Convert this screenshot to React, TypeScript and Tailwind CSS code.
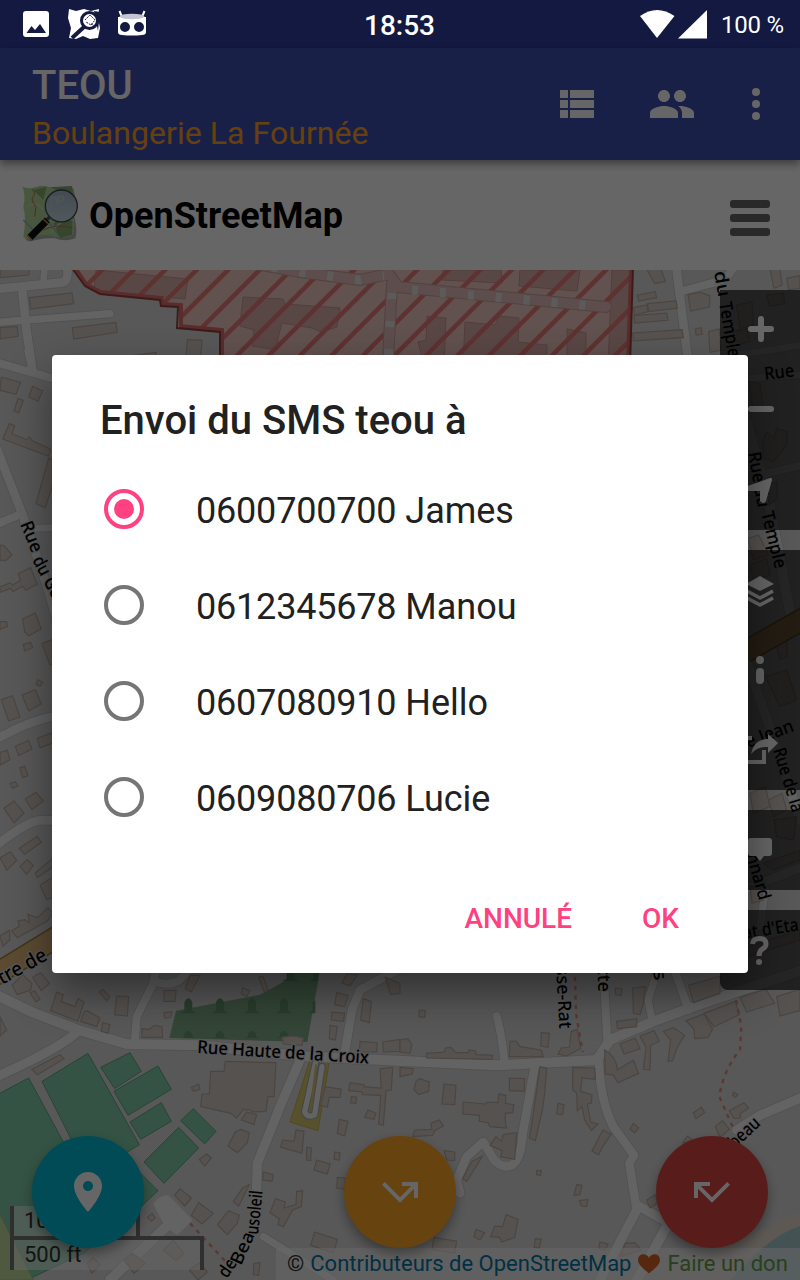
import React from "react";

const contacts = [
  { phone: "0600700700", name: "James", checked: true },
  { phone: "0612345678", name: "Manou", checked: false },
  { phone: "0607080910", name: "Hello", checked: false },
  { phone: "0609080706", name: "Lucie", checked: false },
];

type Tile = { x: number; y: number; roads?: [string, number][]; buildings?: string[] };

/* Every tile is drawn at three times its size on the page. */
const tiles: Tile[] = [
  {
    x: 0,
    y: 265,
    roads: [
      ["M-10 72 L190 52 Q208 45 200 0", 30],
      ["M130 60 L134 0", 24],
      ["M-10 172 L330 146", 26],
      ["M66 70 L80 200 L95 300", 30],
    ],
    buildings: [
      "M0 12 L88 8 L86 30 L0 38z",
      "M88 98 L216 84 L221 116 L92 132z",
      "M0 188 L52 184 L54 214 L0 222z",
      "M217 188 L348 172 L352 202 L221 222z",
      "M562 224 L606 226 L602 280 L558 278z",
      "M398 272 L468 262 L470 290 L396 290z",
    ],
  },
  {
    x: 400,
    y: 265,
    roads: [
      ["M828 0 L866 300", 30],
      ["M848 78 L975 44 L1000 10", 28],
      ["M1020 268 L1210 240", 24],
    ],
    buildings: [
      "M740 12 L782 10 L796 50 L764 56z",
      "M712 90 L766 80 L770 98 L716 108z",
      "M700 128 L740 120 L744 140 L704 150z",
      "M742 116 L828 108 L832 130 L746 140z",
      "M702 152 L800 144 L804 166 L704 174z",
      "M698 204 L846 194 L850 218 L700 228z",
      "M864 88 L902 82 L930 92 L928 126 L872 138z",
      "M886 192 L904 188 L906 208 L888 210z",
      "M926 200 L958 192 L962 256 L930 262z",
      "M1110 12 L1140 12 L1146 60 L1122 70z",
      "M1100 90 L1150 84 L1154 116 L1108 124z",
      "M1000 200 L1040 190 L1050 230 L1010 240z",
      "M1160 40 L1200 32 L1200 70 L1166 74z",
    ],
  },
  {
    x: 0,
    y: 355,
    roads: [
      ["M-10 22 L170 74", 28],
      ["M84 -10 L100 50", 26],
      ["M-10 280 L68 480 L140 690 L190 860", 30],
      ["M60 478 L-10 508", 28],
      ["M70 500 L90 520 L170 518", 24],
    ],
    buildings: [
      "M4 66 L62 82 L48 118 L0 106z",
      "M98 94 L128 108 L114 138 L86 126z",
      "M54 130 L70 136 L56 174 L42 168z",
      "M28 206 L44 212 L36 236 L80 254 L88 246 L98 258 L152 282 L146 304 L8 252z",
      "M146 310 L180 320 L136 458 L108 446z",
      "M0 570 L12 572 L36 600 L18 616 L0 616z",
      "M54 656 L92 638 L112 688 L78 706 L68 694 L38 710 L32 700 L0 712 L0 696 L30 684 L38 690 L62 676z",
      "M68 792 L106 774 L124 822 L86 842 L74 830z",
      "M70 868 L92 862 L98 878 L74 888z",
      "M0 800 L20 800 L22 814 L0 824z",
      "M126 866 L160 852 L180 920 L150 930z",
    ],
  },
  {
    x: 0,
    y: 665,
    roads: [
      ["M-10 222 Q90 165 170 152", 30],
      ["M-10 540 Q80 470 120 466 L170 466", 30],
    ],
    buildings: [
      "M4 104 L38 92 L60 156 L26 168z",
      "M66 90 L106 74 L124 116 L86 138z",
      "M114 44 L128 52 L120 64 L108 58z",
      "M46 244 L86 226 L96 252 L56 272z",
      "M112 220 L160 202 L166 232 L120 248z",
      "M0 262 L22 256 L30 284 L0 300z",
      "M60 308 L74 304 L84 332 L68 338z",
      "M30 356 L46 350 L54 362 L38 370z",
      "M12 430 L42 408 L72 444 L42 474z",
      "M76 402 L108 382 L130 408 L96 434z",
      "M58 550 L112 514 L124 532 L74 568z",
      "M0 578 L32 560 L50 586 L20 616z",
      "M60 604 L82 584 L100 602 L80 628z",
      "M106 624 L160 578 L170 598 L112 638z",
      "M120 660 L160 636 L180 690 L140 704z",
      "M34 798 L58 784 L54 768 L74 764 L88 774 L84 748 L112 758 L144 728 L158 744 L142 768 L52 818z",
      "M0 812 L28 796 L30 824 L8 844z",
    ],
  },
  {
    x: 0,
    y: 960,
    roads: [
      ["M-10 105 L100 158 L235 210 L380 252 L600 256 L900 288 L1210 303", 34],
      ["M235 212 Q190 260 -10 350", 32],
      ["M470 20 L460 70 L410 170 L404 250", 28],
      ["M470 66 Q510 78 536 62 L580 20", 28],
      ["M1210 20 L1080 90 L1056 150 L1034 280", 30],
      ["M900 300 L840 440 L772 610 L768 760", 32],
      ["M330 960 L520 780", 34],
      ["M790 830 L1000 960", 26],
    ],
    buildings: [
      "M36 76 L68 44 L96 70 L92 90 L52 104z",
      "M98 52 L122 38 L148 70 L124 92z",
      "M90 98 L104 92 L120 118 L108 126z",
      "M170 96 L190 104 L184 124 L224 140 L234 116 L252 126 L234 184 L152 152z",
      "M252 156 L262 152 L300 174 L290 200 L242 184z",
      "M308 188 L330 194 L324 220 L304 214z",
      "M350 108 L386 110 L382 168 L344 164z",
      "M298 96 L308 88 L330 112 L320 122z",
      "M492 92 L528 90 L526 124 L492 124z",
      "M426 206 L448 208 L464 196 L486 200 L488 232 L426 232z",
      "M570 46 L600 46 L574 96 L556 86z",
      "M492 158 L516 156 L512 172 L494 174z",
      "M728 84 L750 92 L740 110 L724 102z",
      "M776 52 L788 48 L804 88 L792 94z",
      "M1040 42 L1072 44 L1050 78 L1026 68z",
      "M1010 98 L1044 106 L1034 140 L1004 134z",
      "M996 156 L1034 160 L1030 184 L994 180z",
      "M1090 116 L1114 124 L1108 188 L1082 180z",
      "M1080 244 L1132 248 L1130 276 L1078 276z",
      "M1148 246 L1200 238 L1200 274 L1150 276z",
      "M1156 52 L1200 70 L1200 100 L1172 104z",
      "M96 328 L180 284 L192 296 L112 344z",
      "M676 304 L828 308 L822 410 L804 410 L798 454 L756 456 L752 450 L730 448 L710 474 L692 460 L602 440 L606 402 L628 402 L632 334 L672 334z",
      "M574 382 L596 372 L600 388 L580 394z",
      "M740 456 L770 464 L762 494 L724 480z",
      "M722 508 L748 518 L742 548 L712 578 L684 558 L706 516z",
      "M598 598 L620 582 L634 594 L614 618z",
      "M848 540 L882 544 L888 510 L912 514 L906 580 L842 562z",
      "M920 562 L934 564 L932 602 L920 600z",
      "M950 600 L990 612 L982 642 L942 630z",
      "M1018 478 L1044 484 L1034 528 L1012 520z",
      "M1004 576 L1020 578 L1018 600 L1002 598z",
      "M1104 450 L1128 460 L1122 478 L1094 472z",
      "M1050 368 L1092 374 L1092 380 L1144 384 L1140 326 L1178 322 L1174 390 L1158 392 L1150 496 L1136 492 L1142 406 L1088 404 L1086 396 L1046 392z",
      "M976 380 L1024 388 L1020 412 L988 412 L982 442 L962 436z",
      "M1054 410 L1070 412 L1068 430 L1052 428z",
      "M540 686 L574 714 L554 738 L524 706z",
      "M596 728 L640 760 L606 792 L574 766z",
      "M686 752 L718 766 L712 790 L682 824 L652 794z",
      "M728 684 L748 674 L716 738 L700 724z",
      "M790 636 L820 644 L816 664 L788 660z",
      "M826 716 L856 726 L852 744 L888 734 L890 694 L908 692 L904 740 L878 750 L850 800 L834 794 L838 776 L810 758z",
      "M944 816 L1012 838 L1000 880 L932 856z",
      "M1012 652 L1036 654 L1034 688 L1010 684z",
      "M262 910 L280 892 L300 914 L276 940z",
      "M372 900 L398 880 L436 910 L402 940z",
      "M490 870 L520 842 L552 880 L528 902z",
      "M568 930 L600 908 L622 936 L594 960z",
      "M442 772 L456 760 L466 774 L454 784z",
      "M762 910 L780 908 L776 946 L760 944z",
      "M846 232 L880 228 L910 234 L906 256 L850 252z",
      "M990 196 L1012 200 L1006 240 L988 236z",
      "M0 170 L20 210 L0 228z",
    ],
  },
  {
    x: 400,
    y: 960,
    roads: [
      ["M-10 302 L290 316 L590 300 L630 240 L760 184 L880 140 L1020 92 L1210 30", 34],
      ["M290 168 Q305 220 314 310", 28],
      ["M404 320 L368 520 Q362 640 300 614 L284 602 L250 546 L200 590 L170 660 L180 700", 30],
      ["M622 240 L616 130 L610 20", 28],
      ["M596 300 Q600 420 640 500 L702 586 L688 610 L710 750", 30],
      ["M710 750 L600 960", 32],
      ["M710 735 L810 790", 32],
      ["M800 800 L710 960", 34],
      ["M756 180 L744 120 L770 40", 26],
      ["M866 150 L820 20", 28],
      ["M1210 410 L1080 466 L1010 510", 32],
    ],
    buildings: [
      "M0 240 L24 236 L36 254 L30 280 L0 276z",
      "M80 280 L134 276 L136 264 L152 262 L168 278 L206 278 L206 270 L226 272 L228 284 L278 286 L276 298 L80 294z",
      "M330 244 L350 244 L360 260 L424 270 L430 290 L328 290z",
      "M424 218 L448 220 L444 262 L422 258z",
      "M474 282 L484 264 L508 262 L514 214 L532 208 L542 266 L500 288z",
      "M58 356 L88 366 L86 394 L56 404 L42 388 L48 364z",
      "M132 372 L168 376 L164 434 L126 432z",
      "M328 354 L374 356 L372 394 L328 392z",
      "M190 426 L256 432 L262 426 L294 428 L296 402 L318 406 L316 430 L342 434 L338 458 L316 460 L316 484 L320 504 L270 500 L264 488 L238 484 L238 466 L188 462z",
      "M92 490 L118 480 L130 498 L104 512 L98 526 L38 530 L44 510 L96 508z",
      "M420 320 L440 324 L434 400 L428 446 L406 542 L388 534 L400 460z",
      "M474 430 L492 434 L488 464 L470 462z",
      "M518 322 L584 324 L586 358 L546 354 L542 394 L576 404 L574 430 L562 432 L572 486 L594 492 L574 512 L554 480 L546 440 L532 452 L530 400 L518 390z",
      "M608 510 L634 522 L608 560 L596 584 L576 574z",
      "M700 490 L716 504 L704 518 L690 508z",
      "M310 524 L350 518 L344 598 L302 590 L306 572 L270 556 L288 530 L304 544z",
      "M248 588 L200 664 L188 656 L216 604z",
      "M614 270 Q650 290 652 330 L700 300 L716 340 L654 368 L640 346 L616 342z",
      "M650 184 L710 176 L710 200 L652 206z",
      "M660 252 L706 234 L720 266 L672 282z",
      "M720 228 L762 212 L778 244 L752 256 L750 330 L730 328 L738 262z",
      "M790 214 L820 202 L854 226 L832 262 L818 302 L804 304 L812 240z",
      "M858 182 L912 162 L938 208 L924 232 L884 236 L882 208z",
      "M912 160 L1006 124 L1018 164 L942 200z",
      "M1020 112 L1098 88 L1124 130 L1040 156z",
      "M1130 110 L1200 88 L1200 152 L1140 168z",
      "M698 84 L736 80 L730 130 L720 164 L700 160z",
      "M866 76 L960 48 L960 100 L880 128z",
      "M646 84 L666 86 L664 106 L646 104z",
      "M58 150 L76 152 L74 172 L56 170z",
      "M880 458 L904 442 L914 458 L888 476z",
      "M988 452 L1032 428 L1046 444 L1020 462 L1022 474 L1002 476z",
      "M946 500 L968 482 L988 508 L960 532z",
      "M1000 396 L1014 404 L1006 412 L998 406z",
      "M848 548 L862 528 L886 544z",
      "M410 632 L424 632 L422 646 L410 644z",
      "M530 674 L546 676 L540 704 L522 706z",
      "M538 722 L564 718 L560 740 L544 738z",
      "M318 764 L354 778 L344 832 L306 846 L298 832 L272 830 L284 798 L308 800z",
      "M228 808 L254 818 L240 840 L222 830z",
      "M102 832 L170 844 L164 880 L96 868z",
      "M740 720 L766 704 L772 730 L750 744z",
      "M406 836 L424 838 L418 864 L402 862z",
      "M0 350 L0 322 L40 326 L36 342z",
      "M132 572 L164 576 L164 602 L140 600z",
      "M676 850 L704 848 L724 870 L660 890z",
      "M600 846 L624 852 L616 870 L596 866z",
    ],
  },
  {
    x: 700,
    y: 265,
    roads: [
      ["M140 340 L300 330", 24],
      ["M130 440 L200 680 L270 1040", 34],
      ["M180 630 L310 600", 26],
    ],
    buildings: [
      "M110 120 L156 110 L160 180 L120 190z",
      "M146 350 L180 356 L190 430 L160 440z",
      "M186 530 L200 500 L222 520 L230 490 L262 500 L260 540 L220 590 L190 580z",
      "M196 660 L230 650 L232 700 L208 720z",
      "M144 820 L176 810 L206 870 L160 884z",
      "M150 900 L200 880 L210 930 L160 950z",
    ],
  },
  {
    x: 700,
    y: 640,
    roads: [
      ["M130 40 L206 250 L300 540", 32],
      ["M130 750 L310 680", 30],
      ["M196 750 L180 860", 26],
    ],
    buildings: [
      "M228 8 L260 0 L262 50 L240 60z",
      "M196 110 L260 90 L290 180 L240 200z",
      "M150 460 L196 440 L210 500 L160 520z",
      "M206 480 L246 460 L260 510 L220 530z",
      "M222 540 L290 530 L280 600 L230 590z",
      "M150 740 L180 730 L190 780 L156 790z",
      "M190 670 L300 630 L300 660 L220 690z",
      "M144 920 L300 870 L300 900 L144 950z",
    ],
  },
];

const hatch = Array.from({ length: 24 }, (_, i) => 372 + i * 31.5);

function at(t: { x: number; y: number }) {
  return `translate(${t.x} ${t.y}) scale(0.33333)`;
}

function MapLabel({ x, y, angle, length, children, size = 18 }: { x: number; y: number; angle: number; length: number; children: string; size?: number }) {
  return (
    <text
      transform={`translate(${x} ${y}) rotate(${angle})`}
      textLength={length}
      lengthAdjust="spacingAndGlyphs"
      className="fill-black stroke-[#dddddd] font-medium [font-family:'Noto_Sans',sans-serif] [paint-order:stroke]"
      strokeWidth="2.5"
      fontSize={size}
    >
      {children}
    </text>
  );
}

function StreetMap() {
  return (
    <svg className="absolute inset-0" width="800" height="1010" viewBox="0 270 800 1010">
      <defs>
        <clipPath id="zone">
          <path d="M74 270 L85 286 L100 294 L160 300 L162 306 L179 307 L179 328 L220 332 L220 365 L630 365 L633 270z" />
        </clipPath>
      </defs>
      <rect y="270" width="800" height="1010" fill="#dcdcdc" />
      <path d="M648 1280 L800 1212 V1280z" fill="#e8ddd2" />
      <path d="M730 1280 Q770 1235 800 1226 V1280z" fill="#a9cfd2" />
      <g transform={at({ x: 0, y: 960 })}>
        <path d="M528 152 L780 104 L860 60 L870 20 L962 20 L922 246 L508 234z" fill="#83b08a" />
        <g fill="#679c70">
          {[565, 660, 756, 852].map((x) => (
            <React.Fragment key={x}>
              <path d={`M${x - 24} 160 l12 -9 v-24 q12 -24 24 0 v24 l12 9z`} />
              <path d={`M${x - 20} 234 l8 -4 v-8 q12 -20 24 0 v8 l8 4z`} />
            </React.Fragment>
          ))}
          <path d="M846 64 l14 -8 v-20 h24 v20 l16 8z M926 64 l14 -8 v-20 h14 v28z M926 160 l12 -9 v-24 l8 -6 v39z" />
        </g>
        <g fill="#82cfab" stroke="#5eaa86" strokeWidth="3">
          <path d="M-10 405 L86 354 L190 546 L330 700 L474 690 L400 762 L250 880 L80 960 L-10 740z" />
          <path d="M126 364 L264 280 L418 554 L350 596 L240 590z" />
          <path d="M302 322 L390 278 L424 334 L344 386z" />
          <path d="M342 394 L474 318 L514 388 L384 466z" />
          <path d="M390 486 L484 428 L514 484 L422 538z" />
          <path d="M542 482 L580 446 L648 514 L614 552z" />
          <path d="M432 606 L536 502 L596 564 L492 670z" />
          <path d="M420 638 L474 692 L410 752z" />
        </g>
        <path d="M-10 745 L100 960 H-10z" fill="#c3dfa1" stroke="#aac58a" strokeWidth="3" />
        <path d="M928 306 L988 304 L954 512 L870 486z" fill="#d9ca74" stroke="#c6b654" strokeWidth="3" />
      </g>
      {(["#c8c8c8", "#f7f7f7"] as const).map((color, pass) =>
        tiles.map((t) => (
          <g key={`${pass}-${t.x}-${t.y}`} transform={at(t)} fill="none" stroke={color} strokeLinecap="round" strokeLinejoin="round">
            {t.roads?.map(([d, w]) => (
              <path key={d} d={d} strokeWidth={pass ? w - 4 : w + 1} />
            ))}
          </g>
        ))
      )}
      <g transform={at({ x: 0, y: 960 })}>
        <path d="M464 732 Q484 708 504 710 L572 780 L532 820 L500 800z" fill="#f7f7f7" stroke="#f7f7f7" strokeWidth="8" strokeLinejoin="round" />
      </g>
      {tiles.map((t) => (
        <g key={`${t.x}-${t.y}`} transform={at(t)} fill="#d6ccc5" stroke="#bdada2" strokeWidth="3.5">
          {t.buildings?.map((d) => (
            <path key={d} d={d} />
          ))}
        </g>
      ))}
      <g transform={at({ x: 0, y: 960 })} fill="none" strokeLinecap="round">
        <path d="M946 310 L914 456 Q924 476 944 464 L966 320" stroke="#aaa" strokeWidth="22" />
        <path d="M946 310 L914 456 Q924 476 944 464 L966 320" stroke="#f7f7f7" strokeWidth="16" />
        <path d="M948 316 L932 452" stroke="#d9ca74" strokeWidth="6" />
      </g>
      <g clipPath="url(#zone)">
        <rect y="270" width="800" height="95" fill="#f2cbc6" />
        <g fill="#dfb2ad" stroke="#cb9b97" strokeWidth="1">
          <path d="M96 270 L188 279 L185 299 L94 290z" />
          <path d="M243 297 L283 299 L285 304 L340 308 L337 327 L321 332 L312 328 L282 323 L278 338 L277 350 L252 346 L254 330 L240 326z" />
          <path d="M443 270 L501 270 L502 283 L442 280z M520 270 L580 270 L577 291 L519 286z" />
          <path d="M427 316 L446 318 L444 365 L424 365 L418 342 L426 340z M465 322 L495 325 L499 316 L519 318 L518 342 L547 345 L546 365 L463 365z M567 329 L586 333 L586 365 L567 365z" />
          <path d="M612 270 H632 V365 H608z" />
        </g>
        <g stroke="#ea7d78" strokeWidth="4.5">
          {hatch.map((c) => (
            <path key={c} d={`M${c - 260} 260 L${c - 370} 370`} />
          ))}
        </g>
        <g fill="none">
          <path d="M245 262 L300 272 L360 280 L389 274 L398 287 L606 307 M392 285 L389 340 L388 370" stroke="#c9a6a5" strokeWidth="12" strokeLinecap="round" />
          <path d="M245 262 L300 272 L360 280 L389 274 L398 287 L606 307 M392 285 L389 340 L388 370" stroke="#e8c1bf" strokeWidth="10" strokeLinecap="round" />
          <path d="M272 267 L300 272 L360 280 L384 276 M412 290 L606 307 M392 293 L389 340 L388 370" stroke="#e8e4e2" strokeWidth="9" strokeDasharray="6 22" />
        </g>
        <path d="M74 270 L85 286 L100 294 L160 300 L162 306 L179 307 L179 328 L220 332 L220 365 M630 365 L633 270" fill="none" stroke="#e06f6b" strokeWidth="8" />
      </g>
      <path d="M72 268 L85 286 L100 294 L160 300 L161 306 L178 307 L177 328 L220 332 L220 365 M630 365 L633 268" fill="none" stroke="#974543" strokeWidth="2" />
      <g fill="none">
        <path d="M-10 978 L60 935 M745 652 L810 615" stroke="#9f8444" strokeWidth="23" />
        <path d="M-10 978 L60 935 M745 652 L810 615" stroke="#e5bc7d" strokeWidth="20" />
      </g>
      <g transform={at({ x: 400, y: 960 })} fill="none" stroke="#e58a80" strokeWidth="7" strokeDasharray="13 15">
        <path d="M525 50 L528 160 L548 276" />
        <path d="M1008 120 L1024 200 L1020 270 Q970 330 958 410 L998 500" />
        <path d="M-630 790 L-520 908" />
      </g>
      <MapLabel x={197} y={1053} angle={3.5} length={172}>Rue Haute de la Croix</MapLabel>
      <MapLabel x={227} y={1279} angle={-56} length={19}>de</MapLabel>
      <MapLabel x={241} y={1266} angle={-66} length={34}>Bea</MapLabel>
      <MapLabel x={258} y={1235} angle={-84} length={44}>usoleil</MapLabel>
      <MapLabel x={20} y={524} angle={68} length={32}>Rue</MapLabel>
      <MapLabel x={32} y={560} angle={62} length={54}>du Gen</MapLabel>
      <MapLabel x={2} y={985} angle={-29} length={53} size={20}>tre de</MapLabel>
      <MapLabel x={555} y={945} angle={87} length={84}>Basse-Rat</MapLabel>
      <MapLabel x={597} y={950} angle={88} length={42}>rotte</MapLabel>
      <MapLabel x={648} y={948} angle={78} length={34}>urs</MapLabel>
      <MapLabel x={735} y={1149} angle={-43} length={36}>beau</MapLabel>
      <MapLabel x={714} y={272} angle={80} length={26}>du</MapLabel>
      <MapLabel x={719} y={303} angle={80} length={56}>Temple</MapLabel>
      <MapLabel x={765} y={380} angle={-7} length={30}>Rue</MapLabel>
      <MapLabel x={748} y={453} angle={80} length={56}>Rue du</MapLabel>
      <MapLabel x={761} y={513} angle={76} length={58}>Temple</MapLabel>
      <MapLabel x={748} y={748} angle={-20} length={50}>e Jean</MapLabel>
      <MapLabel x={773} y={750} angle={73} length={66}>Rue de la</MapLabel>
      <MapLabel x={746} y={855} angle={74} length={48}>nnard</MapLabel>
      <MapLabel x={738} y={940} angle={-9} length={62}>tat d'Eta</MapLabel>
    </svg>
  );
}

function ControlIcon({ children }: { children: React.ReactNode }) {
  return (
    <div className="h-20 w-20 text-white">
      <svg width="80" height="80" viewBox="0 0 80 80" fill="currentColor">
        {children}
      </svg>
    </div>
  );
}

function MapControls() {
  return (
    <div className="absolute top-5 right-0 flex w-20 flex-col gap-5">
      <div className="bg-black/62">
        <ControlIcon>
          <rect x="28" y="36" width="26" height="6" rx="3" />
          <rect x="38" y="26" width="6" height="26" rx="3" />
        </ControlIcon>
        <ControlIcon>
          <rect x="28" y="36" width="26" height="6" rx="3" />
        </ControlIcon>
        <ControlIcon>
          <path d="M25 37 L50 28 Q52 27 52 30 L46 51 Q44 55 40 51 V41 L27 41 Q22 40 25 37z" />
        </ControlIcon>
      </div>
      <div className="bg-black/62">
        <ControlIcon>
          <path d="M40 26 L54 34 L40 41 L26 34z" />
          <path d="M27 41 L40 48 L53 41 M27 48 L40 55 L53 48" fill="none" stroke="currentColor" strokeWidth="3.5" strokeLinejoin="round" />
        </ControlIcon>
        <ControlIcon>
          <circle cx="40" cy="30" r="4" />
          <rect x="36" y="38" width="8" height="16" rx="4" />
        </ControlIcon>
        <ControlIcon>
          <path d="M28 28 H32 M26 28 V52 H44 V40" fill="none" stroke="currentColor" strokeWidth="4" />
          <path d="M31 44 Q34 29 48 29 V24 L58 33 L48 43 V37 Q38 36 31 44z" />
        </ControlIcon>
      </div>
      <div className="bg-black/62">
        <ControlIcon>
          <path d="M31 28 H49 Q52 28 52 31 V43 Q52 46 49 46 H44 L40 51 L36 46 H31 Q28 46 28 43 V31 Q28 28 31 28z" />
        </ControlIcon>
      </div>
      <div className="rounded-bl-lg bg-black/62">
        <ControlIcon>
          <path d="M32.500 34 Q33 28.500 39.500 28.500 Q46 28.500 46 34 Q46 37 42.500 39 Q39 41 39 46" fill="none" stroke="currentColor" strokeWidth="5" />
          <circle cx="39" cy="52" r="3" />
        </ControlIcon>
      </div>
    </div>
  );
}

function StatusBar() {
  return (
    <div className="flex h-12 shrink-0 items-center justify-between bg-[#131940] pr-4 pl-[23px] text-white">
      <svg width="124" height="32" viewBox="23 8 124 32" fill="white">
        <path fillRule="evenodd" d="M26 11 H46 Q49 11 49 14 V34 Q49 37 46 37 H26 Q23 37 23 34 V14 Q23 11 26 11z M26.5 33 H46 L40 24 L35 30 L31.5 26z" />
        <path d="M69 9 L76 11 L84 9 L91 11 L99 9 L98 18 L100 28 L98 38 L90 39 L83 36 L76 39 L69 38 L71 28 L68 18z" />
        <path d="M100 12 L94 11 L98 31z" fill="#131940" />
        <circle cx="89.500" cy="20.500" r="8" fill="white" stroke="#131940" strokeWidth="3" />
        <path d="M84.500 26.500 L72 38" stroke="#131940" strokeWidth="4" />
        <path d="M85 20 L90 15 L95 20 L91 25 L86 22 M91 24 L95 26" fill="none" stroke="#131940" strokeWidth="1" strokeDasharray="2 1" />
        <path d="M119.500 11 L122 17 M144.500 11 L142 17" stroke="white" strokeWidth="2" />
        <path fillRule="evenodd" d="M118 17 H146 V32 Q146 35 142 35 Q132 36 122 35 Q118 35 118 32z M125 22 a5 5 0 1 0 0 10 a5 5 0 1 0 0 -10z M139 22 a5 5 0 1 0 0 10 a5 5 0 1 0 0 -10z" />
        <ellipse cx="132" cy="16.500" rx="12.500" ry="2.800" fill="#c3c5d2" />
      </svg>
      <span className="mr-[11px] pt-[3px] pl-[23px] text-[28px] leading-none font-medium">18:53</span>
      <div className="flex items-center">
        <svg width="68" height="32" viewBox="640 8 68 32" fill="white">
          <path d="M640 16 Q657 4 674.500 16 L657 38z" />
          <path d="M707 10 V38.500 H678z" />
        </svg>
        <span className="pt-[2px] pl-[13px] text-[24px] leading-none tracking-[-0.2px]">100 %</span>
      </div>
    </div>
  );
}

function AppBar() {
  return (
    <div className="relative z-10 flex h-28 shrink-0 items-center justify-between bg-[#3f51b5] pr-5 pl-8 shadow-[0_4px_8px_rgba(0,0,0,0.4)]">
      <div className="flex flex-col pt-[10px]">
        <h1 className="h-[47px] text-[40px] leading-[47px] font-medium text-white">TEOU</h1>
        <p className="h-12 text-[32px] leading-[49px] tracking-[0.05px] text-[#ffa024]">Boulangerie La Fournée</p>
      </div>
      <div className="flex items-center text-white">
        <svg className="mr-12" width="48" height="48" viewBox="0 0 24 24" fill="currentColor">
          <path d="M4 14h4v-4H4v4zm0 5h4v-4H4v4zM4 9h4V5H4v4zm5 5h12v-4H9v4zm0 5h12v-4H9v4zM9 5v4h12V5H9z" />
        </svg>
        <svg className="mr-9" width="48" height="48" viewBox="0 0 24 24" fill="currentColor">
          <path d="M16 11c1.66 0 2.99-1.34 2.99-3S17.66 5 16 5s-3 1.34-3 3 1.34 3 3 3zm-8 0c1.66 0 2.99-1.34 2.99-3S9.660 5 8 5 5 6.340 5 8s1.340 3 3 3zm0 2c-2.330 0-7 1.170-7 3.500V19h14v-2.500c0-2.330-4.670-3.500-7-3.500zm8 0c-.290 0-.620.020-.970.050 1.160.840 1.970 1.970 1.970 3.450V19h6v-2.500c0-2.330-4.670-3.500-7-3.500z" />
        </svg>
        <svg width="48" height="48" viewBox="0 0 24 24" fill="currentColor">
          <circle cx="12" cy="6" r="2" />
          <circle cx="12" cy="12" r="2" />
          <circle cx="12" cy="18" r="2" />
        </svg>
      </div>
    </div>
  );
}

function SiteLogo() {
  return (
    <svg className="mt-1" width="60" height="64" viewBox="66 555 180 192">
      <defs>
        <linearGradient id="lens" x1="0" y1="0" x2="0" y2="1">
          <stop offset="0" stopColor="#a9bccb" />
          <stop offset="1" stopColor="#c9dde8" />
        </linearGradient>
      </defs>
      <path d="M70 568 Q90 572 104 564 Q130 556 150 564 Q190 570 216 560 Q228 600 218 640 Q230 690 222 710 Q190 722 160 710 Q130 708 100 716 Q80 724 72 712 Q82 660 72 620 Q82 590 70 560z" transform="translate(4 5)" fill="#000" opacity=".3" />
      <path d="M68 560 Q90 568 104 562 Q130 552 150 562 Q190 568 216 558 Q226 600 218 640 Q228 680 218 706 Q190 718 160 708 Q130 700 100 712 Q80 720 70 710 Q80 660 70 620 Q78 590 68 560z" fill="#b5d69a" />
      <path d="M150 562 L216 558 L220 590z M100 570 L140 560 L130 600z M160 670 L218 640 L216 704 L180 714z" fill="#88b06f" />
      <path d="M80 620 Q110 600 130 630 M150 700 Q190 650 222 660" fill="none" stroke="#c8deaf" strokeWidth="5" />
      <path d="M96 566 Q110 580 98 592 Q92 600 108 620 L104 650 M130 690 Q170 670 218 684" fill="none" stroke="#ba725d" strokeWidth="3" />
      <path d="M70 660 L100 690 M150 670 L180 710" stroke="#8fa9c9" strokeWidth="4" />
      <circle cx="184" cy="618" r="48" fill="url(#lens)" stroke="#404a55" strokeWidth="4" />
      <path d="M154 622 V596 Q164 584 170 602 V610 M174 616 V590 Q192 584 190 600 Q186 606 178 606" fill="none" stroke="#c5d1da" strokeWidth="6" />
      <path d="M150 650 L140 660" stroke="#555" strokeWidth="10" />
      <path d="M142 660 L88 714" stroke="#111" strokeWidth="21" />
      <path d="M130 658 L146 672 M80 704 L96 720" stroke="#c9a13c" strokeWidth="4" />
    </svg>
  );
}

function Fab({ className, d }: { className: string; d: string }) {
  return (
    <div className={`flex size-28 items-center justify-center rounded-full text-white shadow-[0_6px_12px_rgba(0,0,0,0.35)] ${className}`}>
      <svg width="48" height="48" viewBox="0 0 24 24" fill="currentColor">
        <path d={d} />
      </svg>
    </div>
  );
}

function SmsDialog() {
  return (
    <div className="flex h-[618px] w-[696px] flex-col rounded-[4px] bg-white text-[#212121] shadow-[0_20px_44px_rgba(0,0,0,0.45)]">
      <h2 className="h-[107px] shrink-0 pt-[42px] pl-12 text-[40px] leading-[48px] font-medium">Envoi du SMS teou à</h2>
      <div className="flex flex-col">
        {contacts.map((c) => (
          <div key={c.phone} className="flex h-24 items-center pl-[52px]">
            <span
              className={`mb-[2px] flex size-10 items-center justify-center rounded-full border-4 ${
                c.checked ? "border-[#ff4081]" : "border-[#757575]"
              }`}
            >
              {c.checked && <span className="size-5 rounded-full bg-[#ff4081]" />}
            </span>
            <span className="pt-[2px] pl-[52px] text-[36px] leading-[44px]">
              <span className="tracking-[-0.2px]">{c.phone}</span> {c.name}
            </span>
          </div>
        ))}
      </div>
      <div className="mt-[49px] flex items-center justify-end gap-[70px] pr-[69px] text-[28px] leading-[48px] font-medium text-[#ff4081]">
        <span>ANNULÉ</span>
        <span>OK</span>
      </div>
    </div>
  );
}

export default function App() {
  return (
    <div className="relative flex h-[1280px] w-[800px] flex-col overflow-hidden bg-white [font-family:Roboto,sans-serif]">
      <StatusBar />
      <AppBar />
      <div className="flex h-[110px] shrink-0 items-center justify-between bg-white pr-[30px] pl-[22px]">
        <div className="flex items-center">
          <SiteLogo />
          <span className="pt-[2px] pl-[7px] text-[36px] leading-[44px] font-bold text-black">OpenStreetMap</span>
        </div>
        <div className="flex w-10 flex-col gap-[6px] pt-[6px]">
          <span className="h-2 rounded-[3px] bg-[#666]" />
          <span className="h-2 rounded-[3px] bg-[#666]" />
          <span className="h-2 rounded-[3px] bg-[#666]" />
        </div>
      </div>
      <div className="relative flex-1 overflow-hidden">
        <StreetMap />
        <MapControls />
        <div className="absolute bottom-[10px] left-[10px] flex flex-col items-start text-[22px] text-[#333]">
          <div className="h-[30px] w-[130px] border-x-4 border-[#777] bg-white/50 pl-[10px] leading-[30px]">100 m</div>
          <div className="h-[34px] w-[194px] border-x-4 border-t-4 border-[#777] bg-white/50 pl-[10px] leading-[30px]">500 ft</div>
        </div>
        <div className="absolute right-0 bottom-0 flex h-8 w-[524px] items-center bg-white/60 pl-[11px] text-[22px] leading-8 whitespace-nowrap text-[#333]">
          <span>©</span>
          <span className="pl-[6px] text-[#0078a8]">Contributeurs de OpenStreetMap</span>
          <svg className="mx-[7px]" width="22" height="20" viewBox="0 0 22 20" fill="#dc622a">
            <path d="M11 19.500 C9 17 0 12 0 6 C0 -1 9 -1.500 11 4 C13 -1.500 22 -1 22 6 C22 12 13 17 11 19.500z" />
          </svg>
          <span className="text-[#63a14b]">Faire un don</span>
        </div>
        <div className="absolute inset-x-8 bottom-8 flex justify-between">
          <Fab className="bg-[#00bcd4]" d="M12 2C8.130 2 5 5.130 5 9c0 5.250 7 13 7 13s7-7.750 7-13c0-3.870-3.130-7-7-7zm0 9.500c-1.380 0-2.500-1.120-2.500-2.500s1.120-2.500 2.500-2.500 2.500 1.120 2.500 2.500-1.120 2.500-2.500 2.500z" />
          <Fab className="bg-[#ffa726]" d="M3 8.410l9 9 7-7V15h2V7h-8v2h4.590L12 14.590 4.410 7z" />
          <Fab className="bg-[#dc4a44]" d="M19.590 7L12 14.590 6.410 9H11V7H3v8h2v-4.590l7 7 9-9z" />
        </div>
      </div>
      <div className="absolute inset-x-0 top-12 bottom-0 z-20 flex items-center justify-center bg-black/60">
        <SmsDialog />
      </div>
    </div>
  );
}
